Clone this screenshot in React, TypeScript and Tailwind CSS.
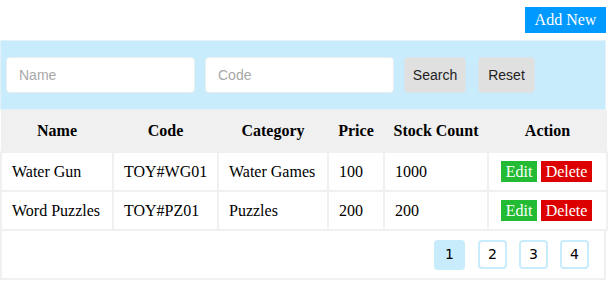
export default function App() {
  const rows = [
    { name: "Water Gun", code: "TOY#WG01", category: "Water Games", price: "100", stock: "1000" },
    { name: "Word Puzzles", code: "TOY#PZ01", category: "Puzzles", price: "200", stock: "200" },
  ];
  const cols = [
    { label: "Name", w: "w-[112px]" },
    { label: "Code", w: "w-[105px]" },
    { label: "Category", w: "w-[110px]" },
    { label: "Price", w: "w-[56px]" },
    { label: "Stock Count", w: "w-[104px]" },
    { label: "Action", w: "w-[119px]" },
  ];

  return (
    <div className="w-[606px] bg-white font-['Liberation_Serif',serif] text-[16px] text-black">
      {/* top bar */}
      <div className="flex justify-end pt-[7px] pb-[7px]">
        <button className="h-[26px] w-[81px] bg-[#0099ff] text-white text-[16px] leading-[26px]">
          Add New
        </button>
      </div>

      {/* search panel */}
      <div className="h-[70px] bg-[#c8ecfc] border border-[#e3f1f8] flex items-center gap-[10px] pl-[5px] font-['Liberation_Sans',Arial,sans-serif]">
        <input
          placeholder="Name"
          className="w-[189px] h-[36px] bg-white rounded-[4px] border border-[#e8eef0] px-3 text-[14px] placeholder:text-[#a8a8a8] outline-none"
        />
        <input
          placeholder="Code"
          className="w-[189px] h-[36px] bg-white rounded-[4px] border border-[#e8eef0] px-3 text-[14px] placeholder:text-[#a8a8a8] outline-none"
        />
        <button className="w-[62px] h-[36px] bg-[#e0e0e0] rounded-[4px] border border-[#d8e4ea] text-[14px] text-[#222]">
          Search
        </button>
        <button className="w-[57px] h-[36px] bg-[#e0e0e0] rounded-[4px] border border-[#d8e4ea] text-[14px] text-[#222] ml-[2px]">
          Reset
        </button>
      </div>

      {/* table */}
      <table className="w-[606px] table-fixed border-collapse">
        <thead>
          <tr className="bg-[#f0f0f0] h-[42px]">
            {cols.map((c) => (
              <th key={c.label} className={`${c.w} font-bold text-center text-[16px]`}>
                {c.label}
              </th>
            ))}
          </tr>
        </thead>
        <tbody>
          {rows.map((r) => (
            <tr key={r.code} className="h-[39px]">
              <td className="border-2 border-[#f0f0f0] pl-[10px]">{r.name}</td>
              <td className="border-2 border-[#f0f0f0] pl-[10px]">{r.code}</td>
              <td className="border-2 border-[#f0f0f0] pl-[10px]">{r.category}</td>
              <td className="border-2 border-[#f0f0f0] pl-[10px]">{r.price}</td>
              <td className="border-2 border-[#f0f0f0] pl-[10px]">{r.stock}</td>
              <td className="border-2 border-[#f0f0f0] pl-[12px]">
                <div className="flex gap-[4px]">
                  <button className="h-[21px] w-[36px] bg-[#22bb33] text-white text-[16px] leading-[21px]">
                    Edit
                  </button>
                  <button className="h-[21px] w-[51px] bg-[#dd0000] text-white text-[16px] leading-[21px]">
                    Delete
                  </button>
                </div>
              </td>
            </tr>
          ))}
        </tbody>
      </table>

      {/* pagination */}
      <div className="h-[49px] border-2 border-t-0 border-[#f0f0f0] flex items-center justify-end gap-[12px] pr-[15px] font-['DejaVu_Sans',sans-serif] text-[14px]">
        <button className="w-[31px] h-[30px] rounded-[4px] bg-[#c8ecfc] mr-[1px]">1</button>
        {["2", "3", "4"].map((p) => (
          <button key={p} className="w-[29px] h-[29px] rounded-[4px] bg-white border-2 border-[#c8ecfc]">
            {p}
          </button>
        ))}
      </div>
    </div>
  );
}
